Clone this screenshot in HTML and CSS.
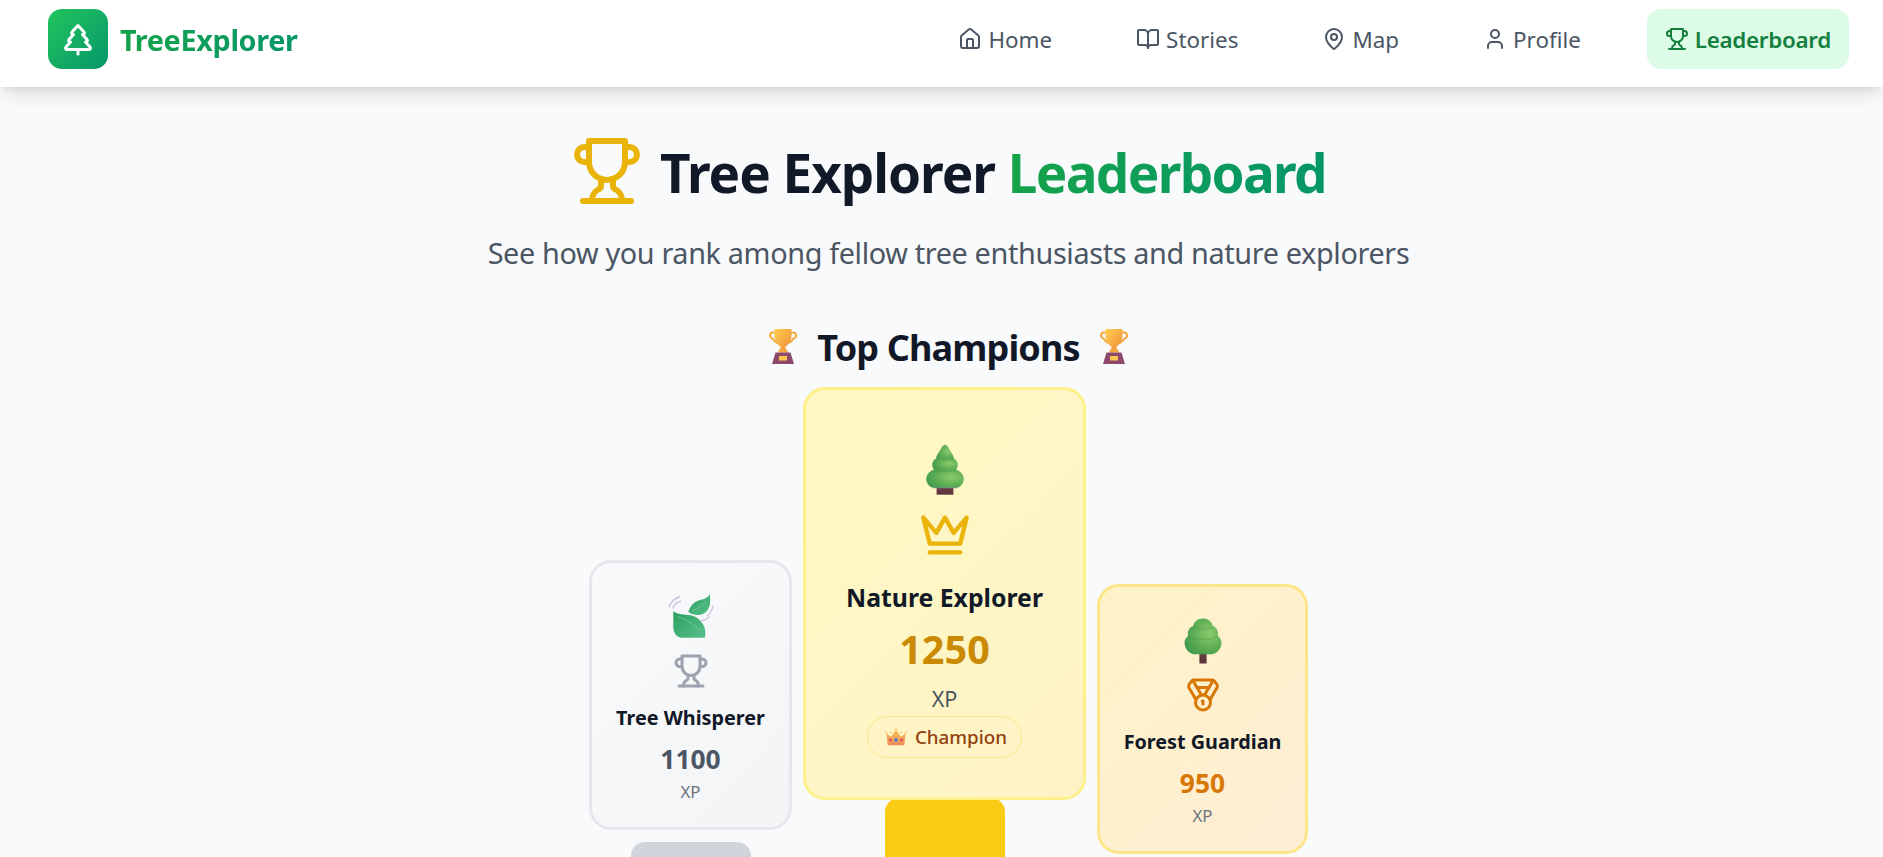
FILE: index.html
```html
<!DOCTYPE html>
<html lang="en">
<head>
<meta charset="utf-8">
<title>TreeExplorer</title>
<link rel="stylesheet" href="styles.css">
</head>
<body>
<svg class="defs" width="0" height="0" aria-hidden="true">
  <defs>
    <linearGradient id="g-trunk" x1="0" y1="0" x2="0" y2="1"><stop offset="0" stop-color="#6a4146"/><stop offset="1" stop-color="#5a3238"/></linearGradient>
    <radialGradient id="g-foliage" cx="0.68" cy="0.42" r="0.75"><stop offset="0" stop-color="#8ccb6a"/><stop offset=".55" stop-color="#5fae56"/><stop offset="1" stop-color="#3f9a4a"/></radialGradient>
    <linearGradient id="g-gold" x1="0" y1="0" x2="1" y2="1"><stop offset="0" stop-color="#ffcf4d"/><stop offset="1" stop-color="#ee8c3a"/></linearGradient>
    <linearGradient id="g-leaf" x1="0" y1="0" x2="1" y2="1"><stop offset="0" stop-color="#2a9f60"/><stop offset="1" stop-color="#58c08c"/></linearGradient>
    <linearGradient id="g-crown" x1="0" y1="0" x2="0" y2="1"><stop offset="0" stop-color="#fcc05a"/><stop offset="1" stop-color="#ee8b5a"/></linearGradient>
    <symbol id="e-trophy" viewBox="0 0 40 40">
      <path d="M12 4.500H10.500a3 3 0 0 0-1 6c1 2 3 3.500 5 4.500M28 4.500h1.500a3 3 0 0 1 1 6c-1 2-3 3.500-5 4.500" fill="none" stroke="#f4ab3e" stroke-width="2"/>
      <path d="M11.500 1h17v6c0 7-4 10.500-6 11.500v3h-5v-3c-2-1-6-4.500-6-11.500z" fill="url(#g-gold)"/>
      <path d="M16.500 21h7l1.500 3.500H15z" fill="#f3a63c"/>
      <path d="M12.500 24.500h15L31 36H9z" fill="#8e4a6a"/>
      <rect x="16" y="28" width="8" height="4.500" fill="#f8c650"/>
    </symbol>
    <symbol id="e-pine" viewBox="0 0 32 32">
      <path d="M11.200 25.500h9.600v4.600h-9.600z" fill="url(#g-trunk)"/>
      <path d="M16 1.500c.8 0 1.300.6 1.800 1.500l3 5c.6 1.300-.1 2.200-1.300 2.500h-7c-1.200-.3-1.900-1.200-1.300-2.500l3-5c.5-.9 1-1.500 1.800-1.500z" fill="url(#g-foliage)"/>
      <path d="M13 9h6c2.500 0 4.300 1.900 4.300 4 0 2.200-1.600 3.700-3.500 3.700h-7.600c-1.900 0-3.500-1.500-3.500-3.700 0-2.100 1.800-4 4.300-4z" fill="url(#g-foliage)"/>
      <path d="M11.500 15.500h9c3.500 0 6.200 2.700 6.200 5.500 0 3-2.300 5.300-4.800 5.300H10.100c-2.500 0-4.800-2.300-4.800-5.300 0-2.800 2.700-5.500 6.200-5.500z" fill="url(#g-foliage)"/>
      <path d="M9 16c2 .8 12 .8 14 0M11 9.600c1.500.6 8.500.6 10 0" fill="none" stroke="#3b8f47" stroke-opacity=".45" stroke-width=".7"/>
      <path d="M9 26.200h14" stroke="#8f8aa8" stroke-opacity=".6" stroke-width=".6"/>
    </symbol>
    <symbol id="e-tree" viewBox="0 0 32 32">
      <path d="M13.600 24h4.800v7h-4.800z" fill="url(#g-trunk)"/>
      <path d="M16 1c3.400 0 6 2.200 6.500 5 2.600.9 3.600 3 3.600 5 0 .6 0 1-.2 1.500 1.500 1.200 2.400 3 2.400 4.700 0 4-3.300 7.600-6.800 7.600H10.500c-3.500 0-6.800-3.600-6.800-7.600 0-1.700.9-3.500 2.400-4.700-.2-.5-.2-.9-.2-1.500 0-2 1-4.100 3.600-5C10 3.200 12.600 1 16 1z" fill="url(#g-foliage)"/>
      <path d="M9.500 6.200c2.800 2.400 10.200 2.400 13 0M6.200 12.600c4 3 15.600 3 19.600 0" fill="none" stroke="#3b8f47" stroke-opacity=".3" stroke-width=".8"/>
    </symbol>
    <symbol id="e-leaf" viewBox="0 0 32 32">
      <path d="M1.500 9a11 11 0 0 1 7-6.500M4 10a7 7 0 0 1 5-4.500M30.500 9a9 9 0 0 1-3.500 6M28 16a9 9 0 0 1-5 2.500" fill="none" stroke="#cfc0e0" stroke-width="1" stroke-linecap="round"/>
      <path d="M28.700.9v5.500C28.700 10 26.500 13 24 14c-3.500 1.300-7 .6-9.800-1.300C15.300 9 17.500 5.300 24.200 4.200c1.700-.3 3.400-1.500 4.500-3.300z" fill="url(#g-leaf)"/>
      <path d="M17 11.500c3.500-1 6.500-3 9-6" fill="none" stroke="#8be0b2" stroke-opacity=".7" stroke-width=".5"/>
      <path d="M4.200 12v11c0 3.500 2.300 6.800 5.600 6.800h15.500c.7-3 .3-6.300-1.300-8.900-1.500-2.600-3.800-4.700-6.500-5.600C13.500 14 7.500 15 4.200 12z" fill="url(#g-leaf)"/>
      <path d="M7 15.500c5.500 2 11.500 6 15.500 9.700" fill="none" stroke="#8be0b2" stroke-opacity=".7" stroke-width=".5"/>
    </symbol>
    <symbol id="e-crown" viewBox="0 0 32 32">
      <path d="M3 11l6.500 5L16 6l6.500 10 6.500-5-2 16H5z" fill="url(#g-crown)"/>
      <circle cx="3" cy="10" r="1.500" fill="#fbd36b"/><circle cx="16" cy="6" r="1.800" fill="#fbd36b"/><circle cx="29" cy="10" r="1.500" fill="#fbd36b"/>
      <circle cx="9.500" cy="10" r="1.200" fill="#fbd36b"/><circle cx="22.500" cy="10" r="1.200" fill="#fbd36b"/>
      <circle cx="16" cy="20" r="2.400" fill="#3f7ee8"/><circle cx="8.500" cy="20" r="1.700" fill="#e0405c"/><circle cx="23.500" cy="20" r="1.700" fill="#e0405c"/>
    </symbol>
    <symbol id="i-tree-pine" viewBox="0 0 24 24"><path d="m17 14 3 3.300a1 1 0 0 1-.7 1.700H4.700a1 1 0 0 1-.7-1.700L7 14h-.3a1 1 0 0 1-.7-1.700L9 9h-.2A1 1 0 0 1 8 7.300L12 3l4 4.300a1 1 0 0 1-.8 1.700H15l3 3.300a1 1 0 0 1-.7 1.700H17Z"/><path d="M12 22v-3"/></symbol>
    <symbol id="i-home" viewBox="0 0 24 24"><path d="M15 21v-8a1 1 0 0 0-1-1h-4a1 1 0 0 0-1 1v8"/><path d="M3 10a2 2 0 0 1 .709-1.528l7-5.999a2 2 0 0 1 2.582 0l7 5.999A2 2 0 0 1 21 10v9a2 2 0 0 1-2 2H5a2 2 0 0 1-2-2z"/></symbol>
    <symbol id="i-book" viewBox="0 0 24 24"><path d="M12 7v14"/><path d="M3 18a1 1 0 0 1-1-1V4a1 1 0 0 1 1-1h5a4 4 0 0 1 4 4 4 4 0 0 1 4-4h5a1 1 0 0 1 1 1v13a1 1 0 0 1-1 1h-6a3 3 0 0 0-3 3 3 3 0 0 0-3-3z"/></symbol>
    <symbol id="i-pin" viewBox="0 0 24 24"><path d="M20 10c0 4.993-5.539 10.193-7.399 11.799a1 1 0 0 1-1.202 0C9.539 20.193 4 14.993 4 10a8 8 0 0 1 16 0"/><circle cx="12" cy="10" r="3"/></symbol>
    <symbol id="i-user" viewBox="0 0 24 24"><path d="M19 21v-2a4 4 0 0 0-4-4H9a4 4 0 0 0-4 4v2"/><circle cx="12" cy="7" r="4"/></symbol>
    <symbol id="i-trophy" viewBox="0 0 24 24"><path d="M6 9H4.500a2.500 2.500 0 0 1 0-5H6"/><path d="M18 9h1.500a2.500 2.500 0 0 0 0-5H18"/><path d="M4 22h16"/><path d="M10 14.660V17c0 .55-.47.98-.97 1.210C7.850 18.750 7 20.240 7 22"/><path d="M14 14.660V17c0 .55.47.98.97 1.210C16.150 18.750 17 20.240 17 22"/><path d="M18 2H6v7a6 6 0 0 0 12 0V2Z"/></symbol>
    <symbol id="i-crown" viewBox="0 0 24 24"><path d="m2 4 3 12h14l3-12-6 7-4-7-4 7-6-7z"/><path d="M5 20h14"/></symbol>
    <symbol id="i-medal" viewBox="0 0 24 24"><path d="M7.210 15 2.660 7.140a2 2 0 0 1 .13-2.200L4.400 2.800A2 2 0 0 1 6 2h12a2 2 0 0 1 1.600.8l1.600 2.140a2 2 0 0 1 .14 2.200L16.790 15"/><path d="M11 12 5.120 2.200"/><path d="m13 12 5.880-9.800"/><path d="M8 7h8"/><circle cx="12" cy="17" r="5"/><path d="M12 18v-2h-.5"/></symbol>
  </defs>
</svg>

<header class="topbar">
  <a class="brand" href="#">
    <span class="brand-mark"><svg class="icon icon-brand"><use href="#i-tree-pine"/></svg></span>
    <span class="brand-name">TreeExplorer</span>
  </a>
  <nav class="nav">
    <a class="nav-link" href="#"><svg class="icon icon-nav"><use href="#i-home"/></svg>Home</a>
    <a class="nav-link" href="#"><svg class="icon icon-nav"><use href="#i-book"/></svg>Stories</a>
    <a class="nav-link" href="#"><svg class="icon icon-nav"><use href="#i-pin"/></svg>Map</a>
    <a class="nav-link" href="#"><svg class="icon icon-nav"><use href="#i-user"/></svg>Profile</a>
    <a class="nav-link is-active" href="#"><svg class="icon icon-nav"><use href="#i-trophy"/></svg>Leaderboard</a>
  </nav>
</header>

<main class="page">
  <h1 class="title"><svg class="icon icon-title"><use href="#i-trophy"/></svg><span>Tree Explorer <span class="title-accent">Leaderboard</span></span></h1>
  <p class="subtitle">See how you rank among fellow tree enthusiasts and nature explorers</p>
  <h2 class="section-title"><svg class="emoji emoji-section"><use href="#e-trophy"/></svg><span>Top Champions</span><svg class="emoji emoji-section"><use href="#e-trophy"/></svg></h2>

  <section class="podium">
    <div class="slot slot-second">
      <article class="card card-second">
        <svg class="emoji emoji-side"><use href="#e-leaf"/></svg>
        <svg class="icon icon-rank rank-silver"><use href="#i-trophy"/></svg>
        <h3 class="name">Tree Whisperer</h3>
        <div class="score score-silver">1100</div>
        <div class="unit">XP</div>
      </article>
      <div class="bar bar-second"></div>
    </div>
    <div class="slot slot-first">
      <article class="card card-first">
        <svg class="emoji emoji-main"><use href="#e-pine"/></svg>
        <svg class="icon icon-crown"><use href="#i-crown"/></svg>
        <h3 class="name name-first">Nature Explorer</h3>
        <div class="score score-first">1250</div>
        <div class="unit unit-first">XP</div>
        <div class="badge"><svg class="emoji emoji-badge"><use href="#e-crown"/></svg>Champion</div>
      </article>
      <div class="bar bar-first"></div>
    </div>
    <div class="slot slot-third">
      <article class="card card-third">
        <svg class="emoji emoji-side"><use href="#e-tree"/></svg>
        <svg class="icon icon-rank rank-bronze"><use href="#i-medal"/></svg>
        <h3 class="name">Forest Guardian</h3>
        <div class="score score-bronze">950</div>
        <div class="unit">XP</div>
      </article>
      <div class="bar bar-third"></div>
    </div>
  </section>
</main>
</body>
</html>
```
FILE: styles.css
```css
* { box-sizing: border-box; }
html, body { margin: 0; height: 100%; overflow: hidden; }
body {
  background: #f9fafb;
  color: #111827;
  font-family: "Noto Sans", "Open Sans", sans-serif;
}
a { text-decoration: none; color: inherit; }
.defs { position: absolute; }
.icon { fill: none; stroke: currentColor; stroke-width: 2; stroke-linecap: round; stroke-linejoin: round; display: block; flex: none; }
.emoji { display: block; flex: none; }

.topbar {
  position: relative;
  height: 87px;
  background: #fff;
  box-shadow: 0 12px 18px -4px rgba(0,0,0,.1), 0 5px 7px -4px rgba(0,0,0,.1);
  display: flex;
  align-items: flex-start;
  justify-content: space-between;
  padding: 9px 34px 0 48px;
}
.brand { display: flex; align-items: center; gap: 12px; }
.brand-mark {
  width: 60px; height: 60px; border-radius: 14px;
  background: linear-gradient(135deg, #22c55e, #059669);
  display: flex; align-items: center; justify-content: center; color: #fff;
}
.icon-brand { width: 36px; height: 36px; }
.brand-name {
  font-size: 28.800px; font-weight: 700; letter-spacing: -.35px;
  background: linear-gradient(90deg, #16a34a, #059669);
  -webkit-background-clip: text; background-clip: text; color: transparent;
}
.nav { display: flex; align-items: center; gap: 48px; }
.nav-link {
  display: flex; align-items: center; gap: 6px;
  height: 60px; padding: 0 18px; border-radius: 14px;
  font-size: 22.400px; color: #4b5563;
}
.nav-link.is-active { background: #dcfce7; color: #15803d; font-weight: 600; letter-spacing: -.3px; }
.icon-nav { width: 24px; height: 24px; }

.page { display: flex; flex-direction: column; align-items: center; padding-left: 14px; }
.title {
  margin: 50px 0 0; display: flex; align-items: center; gap: 17px;
  font-size: 53px; line-height: 72px; font-weight: 700; letter-spacing: -1.030px;
}
.title-accent {
  letter-spacing: -1.650px;
  background: linear-gradient(90deg, #16a34a, #059669);
  -webkit-background-clip: text; background-clip: text; color: transparent;
}
.icon-title { width: 72px; height: 72px; margin-top: -4px; color: #eab308; }
.subtitle { margin: 22px 0 0; font-size: 28.800px; line-height: 43px; color: #4b5563; letter-spacing: -.35px; }
.section-title {
  margin: 50px 0 0; display: flex; align-items: center; gap: 14px;
  font-size: 36px; line-height: 48px; font-weight: 700; letter-spacing: -.85px;
}
.emoji-section { width: 40px; height: 40px; }

.podium { margin-top: 15px; display: flex; align-items: flex-end; justify-content: center; gap: 11px; }
.slot { display: flex; flex-direction: column; align-items: center; }
.card {
  display: flex; flex-direction: column; align-items: center;
  border: 3px solid; border-radius: 22px;
}
.card-first { position: relative; z-index: 1; width: 283px; height: 413px; padding-top: 52px; background: linear-gradient(135deg, #fef9c3, #fef3c7); border-color: #fef08a; }
.card-second { width: 203px; height: 270px; padding-top: 30px; background: linear-gradient(135deg, #f9fafb, #f3f4f6); border-color: #e5e7eb; }
.card-third { width: 211px; height: 270px; padding-top: 30px; background: linear-gradient(135deg, #fef3c7, #ffedd5); border-color: #fde68a; }
.emoji-main { width: 56px; height: 56px; }
.emoji-side { width: 48px; height: 48px; }
.icon-crown { width: 52px; height: 52px; margin-top: 11px; color: #eab308; }
.icon-rank { width: 36px; height: 36px; margin-top: 12px; }
.rank-silver { color: #9ca3af; }
.rank-bronze { color: #d97706; }
.name { margin: 14px 0 0; font-size: 19.800px; line-height: 29px; font-weight: 700; }
.name-first { font-size: 24.800px; line-height: 36px; margin-top: 18px; }
.score { margin-top: 9px; font-size: 26.400px; line-height: 36px; font-weight: 700; }
.score-first { font-size: 39.600px; line-height: 54px; color: #ca8a04; margin-top: 7px; }
.score-silver { color: #4b5563; }
.score-bronze { color: #d97706; }
.unit { margin-top: 4px; font-size: 16.800px; line-height: 22px; color: #6b7280; }
.unit-first { font-size: 21.600px; line-height: 30px; color: #4b5563; margin-top: 8px; }
.badge {
  display: flex; align-items: center; gap: 7px; height: 42px; padding: 0 14px 0 16px; margin-top: 2px;
  border: 1px solid #fde68a; border-radius: 21px; background: rgba(254,243,199,.6);
  color: #92400e; font-size: 18.800px; font-weight: 500;
}
.emoji-badge { width: 24px; height: 24px; }
.bar { width: 120px; border-radius: 14px 14px 0 0; }
.bar-first { height: 160px; background: #facc15; margin-top: -2px; }
.bar-second { height: 116px; background: #d1d5db; margin-top: 12px; }
.bar-third { height: 92px; background: #fbbf24; margin-top: 12px; }
```
